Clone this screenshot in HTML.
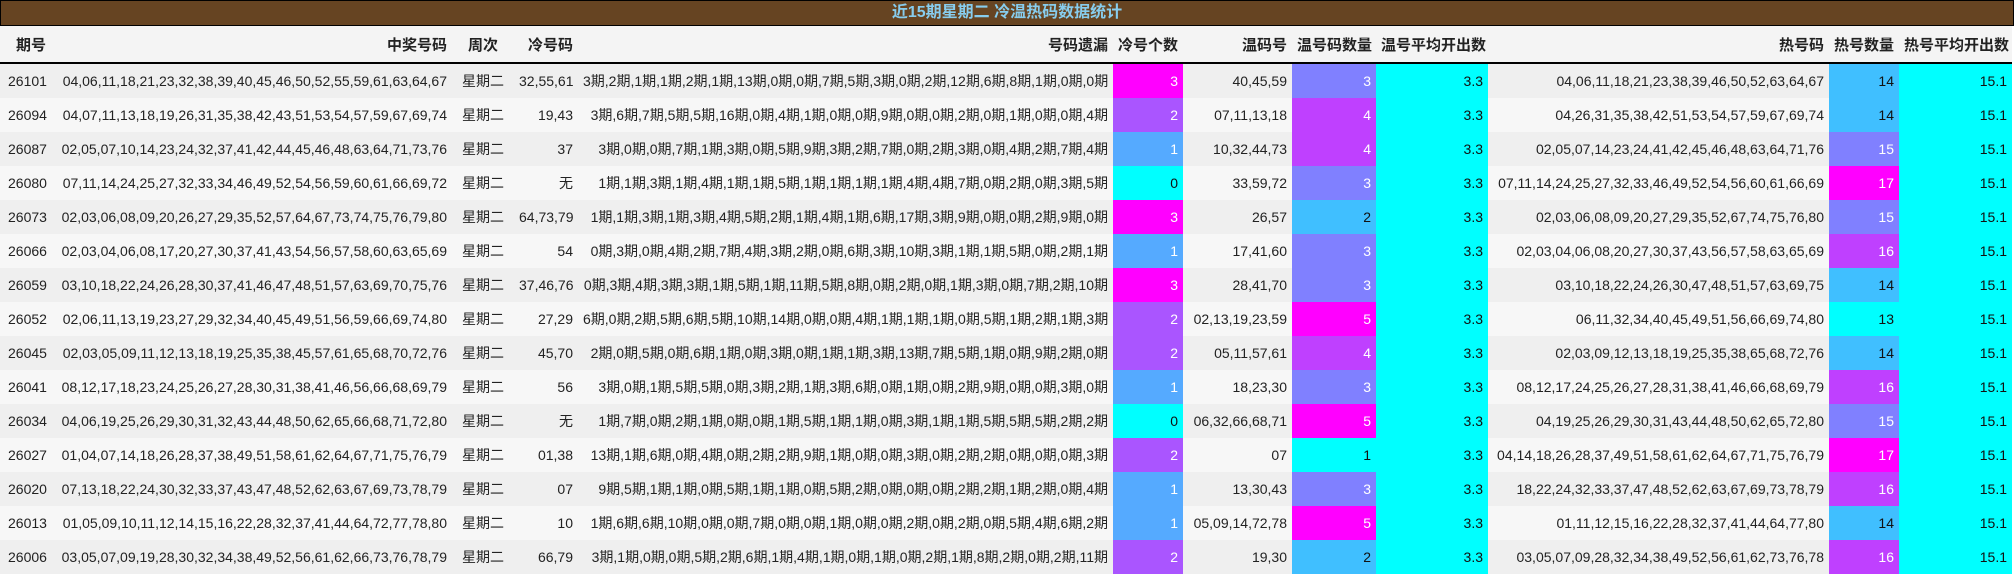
<!DOCTYPE html>
<html><head><meta charset="utf-8"><style>
body{margin:0;background:#fff;width:2014px;height:573px;overflow:hidden;font-family:"Liberation Sans","Noto Sans CJK SC",sans-serif;font-size:14px;color:#222}
.t{height:26px;background:#664422;border:1px solid #000;color:#87cdee;font-weight:bold;font-size:16px;text-align:center;line-height:24px;box-sizing:border-box;width:2014px}
table{border-collapse:collapse;table-layout:fixed;width:2012px}
td,th{padding:0 5px;white-space:nowrap;overflow:hidden;text-align:right;height:34px}
th{font-weight:bold;font-size:15px;background:#f4f4f4;border-bottom:2px solid #000;height:36px}
tr:nth-child(odd) td{background:#f7f7f7}
tr:nth-child(even) td{background:#efefef}
td.c,th.c{text-align:center}
th.l0{text-align:left;padding-left:16px}
td.l{text-align:left;padding-left:8px}
td.a{background:#ff00ff!important;color:#fff}
td.b{background:#bf40ff!important;color:#fff}
td.p{background:#aa55ff!important;color:#fff}
td.m{background:#8080ff!important;color:#fff}
td.s{background:#55aaff!important;color:#fff}
td.k{background:#40bfff!important;color:#111}
td.y{background:#00ffff!important;color:#111}
</style></head><body>
<div class="t">近15期星期二 冷温热码数据统计</div>
<table>
<colgroup><col style="width:54px"><col style="width:398px"><col style="width:62px"><col style="width:64px"><col style="width:535px"><col style="width:70px"><col style="width:109px"><col style="width:84px"><col style="width:112px"><col style="width:341px"><col style="width:70px"><col style="width:113px"></colgroup>
<tr><th class="l0">期号</th><th>中奖号码</th><th class="c">周次</th><th>冷号码</th><th>号码遗漏</th><th>冷号个数</th><th>温码号</th><th>温号码数量</th><th>温号平均开出数</th><th>热号码</th><th>热号数量</th><th>热号平均开出数</th></tr>
<tr><td class="l">26101</td><td>04,06,11,18,21,23,32,38,39,40,45,46,50,52,55,59,61,63,64,67</td><td class="c">星期二</td><td>32,55,61</td><td>3期,2期,1期,1期,2期,1期,13期,0期,0期,7期,5期,3期,0期,2期,12期,6期,8期,1期,0期,0期</td><td class="a">3</td><td>40,45,59</td><td class="m">3</td><td class="y">3.3</td><td>04,06,11,18,21,23,38,39,46,50,52,63,64,67</td><td class="k">14</td><td class="y">15.1</td></tr>
<tr><td class="l">26094</td><td>04,07,11,13,18,19,26,31,35,38,42,43,51,53,54,57,59,67,69,74</td><td class="c">星期二</td><td>19,43</td><td>3期,6期,7期,5期,5期,16期,0期,4期,1期,0期,0期,9期,0期,0期,2期,0期,1期,0期,0期,4期</td><td class="p">2</td><td>07,11,13,18</td><td class="b">4</td><td class="y">3.3</td><td>04,26,31,35,38,42,51,53,54,57,59,67,69,74</td><td class="k">14</td><td class="y">15.1</td></tr>
<tr><td class="l">26087</td><td>02,05,07,10,14,23,24,32,37,41,42,44,45,46,48,63,64,71,73,76</td><td class="c">星期二</td><td>37</td><td>3期,0期,0期,7期,1期,3期,0期,5期,9期,3期,2期,7期,0期,2期,3期,0期,4期,2期,7期,4期</td><td class="s">1</td><td>10,32,44,73</td><td class="b">4</td><td class="y">3.3</td><td>02,05,07,14,23,24,41,42,45,46,48,63,64,71,76</td><td class="m">15</td><td class="y">15.1</td></tr>
<tr><td class="l">26080</td><td>07,11,14,24,25,27,32,33,34,46,49,52,54,56,59,60,61,66,69,72</td><td class="c">星期二</td><td>无</td><td>1期,1期,3期,1期,4期,1期,1期,5期,1期,1期,1期,1期,4期,4期,7期,0期,2期,0期,3期,5期</td><td class="y">0</td><td>33,59,72</td><td class="m">3</td><td class="y">3.3</td><td>07,11,14,24,25,27,32,33,46,49,52,54,56,60,61,66,69</td><td class="a">17</td><td class="y">15.1</td></tr>
<tr><td class="l">26073</td><td>02,03,06,08,09,20,26,27,29,35,52,57,64,67,73,74,75,76,79,80</td><td class="c">星期二</td><td>64,73,79</td><td>1期,1期,3期,1期,3期,4期,5期,2期,1期,4期,1期,6期,17期,3期,9期,0期,0期,2期,9期,0期</td><td class="a">3</td><td>26,57</td><td class="k">2</td><td class="y">3.3</td><td>02,03,06,08,09,20,27,29,35,52,67,74,75,76,80</td><td class="m">15</td><td class="y">15.1</td></tr>
<tr><td class="l">26066</td><td>02,03,04,06,08,17,20,27,30,37,41,43,54,56,57,58,60,63,65,69</td><td class="c">星期二</td><td>54</td><td>0期,3期,0期,4期,2期,7期,4期,3期,2期,0期,6期,3期,10期,3期,1期,1期,5期,0期,2期,1期</td><td class="s">1</td><td>17,41,60</td><td class="m">3</td><td class="y">3.3</td><td>02,03,04,06,08,20,27,30,37,43,56,57,58,63,65,69</td><td class="b">16</td><td class="y">15.1</td></tr>
<tr><td class="l">26059</td><td>03,10,18,22,24,26,28,30,37,41,46,47,48,51,57,63,69,70,75,76</td><td class="c">星期二</td><td>37,46,76</td><td>0期,3期,4期,3期,3期,1期,5期,1期,11期,5期,8期,0期,2期,0期,1期,3期,0期,7期,2期,10期</td><td class="a">3</td><td>28,41,70</td><td class="m">3</td><td class="y">3.3</td><td>03,10,18,22,24,26,30,47,48,51,57,63,69,75</td><td class="k">14</td><td class="y">15.1</td></tr>
<tr><td class="l">26052</td><td>02,06,11,13,19,23,27,29,32,34,40,45,49,51,56,59,66,69,74,80</td><td class="c">星期二</td><td>27,29</td><td>6期,0期,2期,5期,6期,5期,10期,14期,0期,0期,4期,1期,1期,1期,0期,5期,1期,2期,1期,3期</td><td class="p">2</td><td>02,13,19,23,59</td><td class="a">5</td><td class="y">3.3</td><td>06,11,32,34,40,45,49,51,56,66,69,74,80</td><td class="y">13</td><td class="y">15.1</td></tr>
<tr><td class="l">26045</td><td>02,03,05,09,11,12,13,18,19,25,35,38,45,57,61,65,68,70,72,76</td><td class="c">星期二</td><td>45,70</td><td>2期,0期,5期,0期,6期,1期,0期,3期,0期,1期,1期,3期,13期,7期,5期,1期,0期,9期,2期,0期</td><td class="p">2</td><td>05,11,57,61</td><td class="b">4</td><td class="y">3.3</td><td>02,03,09,12,13,18,19,25,35,38,65,68,72,76</td><td class="k">14</td><td class="y">15.1</td></tr>
<tr><td class="l">26041</td><td>08,12,17,18,23,24,25,26,27,28,30,31,38,41,46,56,66,68,69,79</td><td class="c">星期二</td><td>56</td><td>3期,0期,1期,5期,5期,0期,3期,2期,1期,3期,6期,0期,1期,0期,2期,9期,0期,0期,3期,0期</td><td class="s">1</td><td>18,23,30</td><td class="m">3</td><td class="y">3.3</td><td>08,12,17,24,25,26,27,28,31,38,41,46,66,68,69,79</td><td class="b">16</td><td class="y">15.1</td></tr>
<tr><td class="l">26034</td><td>04,06,19,25,26,29,30,31,32,43,44,48,50,62,65,66,68,71,72,80</td><td class="c">星期二</td><td>无</td><td>1期,7期,0期,2期,1期,0期,0期,1期,5期,1期,1期,0期,3期,1期,1期,5期,5期,5期,2期,2期</td><td class="y">0</td><td>06,32,66,68,71</td><td class="a">5</td><td class="y">3.3</td><td>04,19,25,26,29,30,31,43,44,48,50,62,65,72,80</td><td class="m">15</td><td class="y">15.1</td></tr>
<tr><td class="l">26027</td><td>01,04,07,14,18,26,28,37,38,49,51,58,61,62,64,67,71,75,76,79</td><td class="c">星期二</td><td>01,38</td><td>13期,1期,6期,0期,4期,0期,2期,2期,9期,1期,0期,0期,3期,0期,2期,2期,0期,0期,0期,3期</td><td class="p">2</td><td>07</td><td class="y">1</td><td class="y">3.3</td><td>04,14,18,26,28,37,49,51,58,61,62,64,67,71,75,76,79</td><td class="a">17</td><td class="y">15.1</td></tr>
<tr><td class="l">26020</td><td>07,13,18,22,24,30,32,33,37,43,47,48,52,62,63,67,69,73,78,79</td><td class="c">星期二</td><td>07</td><td>9期,5期,1期,1期,0期,5期,1期,1期,0期,5期,2期,0期,0期,0期,2期,2期,1期,2期,0期,4期</td><td class="s">1</td><td>13,30,43</td><td class="m">3</td><td class="y">3.3</td><td>18,22,24,32,33,37,47,48,52,62,63,67,69,73,78,79</td><td class="b">16</td><td class="y">15.1</td></tr>
<tr><td class="l">26013</td><td>01,05,09,10,11,12,14,15,16,22,28,32,37,41,44,64,72,77,78,80</td><td class="c">星期二</td><td>10</td><td>1期,6期,6期,10期,0期,0期,7期,0期,0期,1期,0期,0期,2期,0期,2期,0期,5期,4期,6期,2期</td><td class="s">1</td><td>05,09,14,72,78</td><td class="a">5</td><td class="y">3.3</td><td>01,11,12,15,16,22,28,32,37,41,44,64,77,80</td><td class="k">14</td><td class="y">15.1</td></tr>
<tr><td class="l">26006</td><td>03,05,07,09,19,28,30,32,34,38,49,52,56,61,62,66,73,76,78,79</td><td class="c">星期二</td><td>66,79</td><td>3期,1期,0期,0期,5期,2期,6期,1期,4期,1期,0期,1期,0期,2期,1期,8期,2期,0期,2期,11期</td><td class="p">2</td><td>19,30</td><td class="k">2</td><td class="y">3.3</td><td>03,05,07,09,28,32,34,38,49,52,56,61,62,73,76,78</td><td class="b">16</td><td class="y">15.1</td></tr>
</table>
</body></html>
